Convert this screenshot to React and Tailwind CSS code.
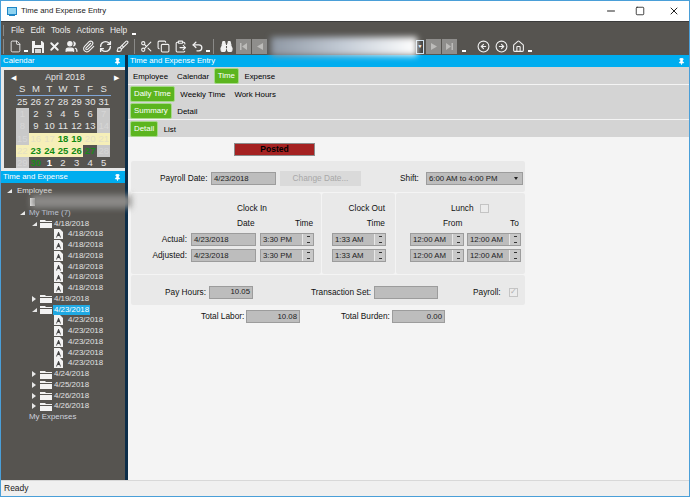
import {
  Binoculars, Brush, CircleArrowLeft, CircleArrowRight, ClipboardPaste, Copy, File, House, Minus, Paperclip,
  Pin, RefreshCw, Scissors, Square, Undo2, Users, X
} from 'lucide-react';

const fontStack = { fontFamily: '"Liberation Sans", Arial, sans-serif' };

function Dropdown() {
  return <span className="block h-[2px] w-[4px] translate-y-[4px] bg-white" />;
}

function Sep() {
  return <span className="mx-[3px] h-[15px] w-px bg-[#8a8a88]" />;
}

function ToolIcon({ icon: Icon, fill, strokeWidth = 2 }) {
  return (
    <span className="flex w-[17px] items-center justify-center">
      <Icon size={13} strokeWidth={strokeWidth} className="text-[#f2f2f2]" fill={fill ? '#f2f2f2' : 'none'} />
    </span>
  );
}

function SaveIcon() {
  return (
    <span className="flex w-[17px] items-center justify-center">
      <svg width="12" height="12" viewBox="0 0 12 12">
        <path d="M0 0h10l2 2v10H0z" fill="#f2f2f2" />
        <path d="M3 0h6v4H3z M2 7h8v5H2z" fill="#565450" />
        <path d="M3 8h6v4H3z" fill="#d8d8d8" />
      </svg>
    </span>
  );
}

function NavButton({ d }) {
  return (
    <span className="flex h-[15px] w-[15px] items-center justify-center bg-[#8f8e8c]">
      <svg width="11" height="11" viewBox="0 0 11 11"><path d={d} fill="#bdbcba" /></svg>
    </span>
  );
}

function PanelHeader({ title, className = '' }) {
  return (
    <div className={`flex items-center justify-between bg-[#00adef] pl-[2px] pr-[4px] text-[7.8px] text-white ${className}`}>
      <span>{title}</span>
      <Pin size={7} strokeWidth={3} fill="white" />
    </div>
  );
}

function CalendarCell({ value, kind }) {
  const styles = {
    normal: 'text-[#e6e6e6]',
    bold: 'text-white font-bold',
    off: 'bg-[#c9c9c9] text-[#d6d6d6]',
    pale: 'bg-[#f6efb8] text-[#e4e0c4]',
    posted: 'bg-[#f6efb8] text-[#128a12] font-bold',
    dark: 'text-[#1a8a1a] font-bold'
  };
  return <div className={`flex h-[12.2px] items-center justify-center ${styles[kind]}`}>{value}</div>;
}

const calendarRows = [
  [[25, 'normal'], [26, 'normal'], [27, 'normal'], [28, 'normal'], [29, 'normal'], [30, 'normal'], [31, 'normal']],
  [[1, 'off'], [2, 'normal'], [3, 'normal'], [4, 'normal'], [5, 'normal'], [6, 'normal'], [7, 'off']],
  [[8, 'off'], [9, 'normal'], [10, 'normal'], [11, 'normal'], [12, 'normal'], [13, 'normal'], [14, 'off']],
  [[15, 'off'], [16, 'pale'], [17, 'pale'], [18, 'posted'], [19, 'posted'], [20, 'pale'], [21, 'pale']],
  [[22, 'pale'], [23, 'posted'], [24, 'posted'], [25, 'posted'], [26, 'posted'], [27, 'dark'], [28, 'off']],
  [[29, 'off'], [30, 'dark'], [1, 'bold'], [2, 'normal'], [3, 'normal'], [4, 'normal'], [5, 'normal']]
];

function Calendar() {
  return (
    <div className="ml-[3px] mt-[3px] h-[98px] w-[122px] overflow-hidden bg-[#565450] text-[9.5px] text-[#e6e6e6]">
      <div className="flex h-[13px] items-center justify-between px-[7px] pt-[3px]">
        <span className="text-[7px] text-white">◀</span>
        <span className="text-[8.8px]">April 2018</span>
        <span className="text-[7px] text-white">▶</span>
      </div>
      <div className="ml-[11.5px] mr-[15.5px] grid grid-cols-7 border-b border-[#7fa6d8] text-center leading-[12px]">
        {['S', 'M', 'T', 'W', 'T', 'F', 'S'].map((day, index) => <div key={index}>{day}</div>)}
      </div>
      <div className="ml-[11.5px] mr-[15.5px]">
        {calendarRows.map((row, rowIndex) => (
          <div key={rowIndex} className="grid grid-cols-7">
            {row.map(([value, kind], index) => <CalendarCell key={index} value={value} kind={kind} />)}
          </div>
        ))}
      </div>
    </div>
  );
}

function FolderIcon() {
  return (
    <svg width="12" height="9" viewBox="0 0 12 9" className="shrink-0">
      <path d="M0 1h5l1 1h6v1H0z M0 4h12v5H0z" fill="#f2f2f2" />
    </svg>
  );
}

function DocIcon() {
  return (
    <svg width="9" height="10" viewBox="0 0 9 10" className="shrink-0">
      <path d="M0 0h6l3 3v7H0z" fill="#f2f2f2" />
      <path d="M2 8.5 4.3 3h.6L7 8.5H6L5.5 7H3.5L3 8.5z" fill="#444" />
    </svg>
  );
}

function Twisty({ open }) {
  return (
    <svg width="5" height="6" viewBox="0 0 5 6" className="shrink-0">
      {open ? <path d="M5 1v4H0z" fill="#e8e8e8" /> : <path d="M0 0l4 3-4 3z" fill="#e8e8e8" />}
    </svg>
  );
}

function TreeRow({ indent, children }) {
  return (
    <div className="flex h-[10.76px] items-center whitespace-nowrap" style={{ paddingLeft: indent }}>
      {children}
    </div>
  );
}

function DateFolder({ date, open, selected }) {
  return (
    <TreeRow indent={31}>
      <Twisty open={open} />
      <span className="ml-[3px] flex w-[13px]"><FolderIcon /></span>
      <span className={`px-[1px] leading-[10px] ${selected ? 'bg-[#1fa9e3] text-white' : ''}`}>{date}</span>
    </TreeRow>
  );
}

function DateEntry({ date }) {
  return (
    <TreeRow indent={53}>
      <DocIcon />
      <span className="ml-[5px]">{date}</span>
    </TreeRow>
  );
}

function Tree() {
  return (
    <div className="relative min-h-0 flex-1 bg-[#565450] pt-[3px] text-[7.9px] text-[#e2e2e2]">
      <TreeRow indent={6}><Twisty open /><span className="ml-[5px]">Employee</span></TreeRow>
      <TreeRow indent={29}><span className="h-[8px] w-[5px] bg-white" /></TreeRow>
      <TreeRow indent={19}><Twisty open /><span className="ml-[4px] text-[#bfc5d6]">My Time (7)</span></TreeRow>
      <DateFolder date="4/18/2018" open />
      {[0, 1, 2, 3, 4, 5].map((key) => <DateEntry key={key} date="4/18/2018" />)}
      <DateFolder date="4/19/2018" />
      <DateFolder date="4/23/2018" open selected />
      {[0, 1, 2, 3, 4].map((key) => <DateEntry key={key} date="4/23/2018" />)}
      <DateFolder date="4/24/2018" />
      <DateFolder date="4/25/2018" />
      <DateFolder date="4/26/2018" />
      <DateFolder date="4/26/2018" />
      <TreeRow indent={28}><span className="text-[#cfd3de]">My Expenses</span></TreeRow>
      <div className="absolute left-[30px] top-[12px] h-[13px] w-[100px] bg-[#8b8a88] blur-[3px]" />
    </div>
  );
}

function Tab({ label, active }) {
  if (active) {
    return (
      <span className="mr-px flex h-[16px] translate-y-[-1px] items-center rounded-[2px] border border-[#a6d98a] bg-[#5cb51f] px-[3px] text-white">
        {label}
      </span>
    );
  }
  return <span className="mx-[2.5px] px-[2px]">{label}</span>;
}

function TabRow({ children, paddingLeft = 'pl-[2px]' }) {
  return (
    <div className={`flex h-[17px] items-center bg-[#d4d4d4] pt-[3px] text-[7.9px] text-black ${paddingLeft}`}>{children}</div>
  );
}

function Field({ value, className = '', align = 'left', children }) {
  return (
    <span className={`flex h-[13px] items-center border border-[#9c9c9c] bg-[#bdbdbd] px-[2px] text-[7.8px] text-[#222] ${align === 'right' ? 'justify-end' : ''} ${className}`}>
      {value}
      {children}
    </span>
  );
}

function TimeField({ value, className = 'w-[54px]' }) {
  return (
    <span className={`flex h-[13px] items-center border border-[#9c9c9c] bg-[#bdbdbd] pl-[2px] text-[7.8px] text-[#222] ${className}`}>
      <span className="flex-1 whitespace-nowrap">{value}</span>
      <span className="flex h-full w-[11px] flex-col items-center justify-around border-l border-[#e8e8e8] bg-[#c8c8c8]">
        <span className="h-[1px] w-[3px] bg-[#333]" />
        <span className="h-[1px] w-[3px] bg-[#333]" />
      </span>
    </span>
  );
}

function ClockLabel({ children }) {
  return <span className="w-[60px] pr-[4px] text-right">{children}</span>;
}

function CheckBox({ checked }) {
  return (
    <span className="flex h-[9px] w-[9px] items-center justify-center border border-[#c4c4c4] bg-[#ececec] text-[8px] leading-none text-[#b0b0b0]">
      {checked ? '✓' : ''}
    </span>
  );
}

export default function App() {
  return (
    <div className="flex h-[497px] w-[690px] flex-col overflow-hidden border border-[#4a9fd8] bg-white" style={fontStack}>
      <div className="flex h-[20px] shrink-0 items-center bg-white pl-[6px] text-[7.8px] text-[#222]">
        <svg width="10" height="9" viewBox="0 0 10 9" className="mr-[4px]">
          <rect x="0.5" y="0.5" width="9" height="7" fill="#8fd3f0" stroke="#1f86c6" />
          <rect x="2" y="8" width="6" height="1" fill="#1f86c6" />
        </svg>
        <span>Time and Expense Entry</span>
        <span className="ml-auto flex items-center text-[#222]">
          <span className="flex w-[20px] justify-center"><Minus size={12} /></span>
          <span className="flex w-[38px] justify-center"><Square size={10} /></span>
          <span className="flex w-[30px] justify-center"><X size={12} /></span>
        </span>
      </div>

      <div className="h-px shrink-0 bg-[#3c3c3c]" />
      <div className="flex h-[16px] shrink-0 items-center bg-[#565450] pl-[2px] text-[8.4px] text-[#ececec]">
        <span className="mr-[7px] h-[11px] w-px bg-[#8a8a88]" />
        <span className="mr-[6px]">File</span>
        <span className="mr-[6px]">Edit</span>
        <span className="mr-[6px]">Tools</span>
        <span className="mr-[6px]">Actions</span>
        <span className="mr-[5px]">Help</span>
        <Dropdown />
      </div>

      <div className="relative flex h-[17px] shrink-0 items-center bg-[#565450] pl-[2px]">
        <span className="mr-[3px] h-[15px] w-px bg-[#8a8a88]" />
        <ToolIcon icon={File} strokeWidth={1.6} />
        <span><Dropdown /></span>
        <span className="ml-[1px]"><SaveIcon /></span>
        <ToolIcon icon={X} strokeWidth={3.5} />
        <ToolIcon icon={Users} fill />
        <ToolIcon icon={Paperclip} />
        <ToolIcon icon={RefreshCw} strokeWidth={2.6} />
        <ToolIcon icon={Brush} />
        <Sep />
        <ToolIcon icon={Scissors} />
        <ToolIcon icon={Copy} />
        <ToolIcon icon={ClipboardPaste} />
        <ToolIcon icon={Undo2} strokeWidth={2.4} />
        <Dropdown />
        <Sep />
        <span className="ml-[1px]"><ToolIcon icon={Binoculars} fill /></span>
        <span className="ml-[1px]"><NavButton d="M2 2h1.5v7H2z M9 2v7L4 5.5z" /></span>
        <span className="ml-[1px]"><NavButton d="M9 2v7L3 5.5z" /></span>
        <span className="h-[15px] w-[149px] shrink-0" />
        <span className="flex h-[14px] w-[8px] items-center justify-center border border-[#cfe0ee] bg-[#3f3e3c] text-[5px] text-white">▼</span>
        <span className="ml-[2px]"><NavButton d="M3 2v7l6-3.5z" /></span>
        <span className="ml-[1px]"><NavButton d="M2 2v7l5-3.5z M7.5 2H9v7H7.5z" /></span>
        <span className="ml-[5px]"><Dropdown /></span>
        <span className="ml-[2px]"><Sep /></span>
        <span className="ml-[1px]"><ToolIcon icon={CircleArrowLeft} /></span>
        <span className="ml-[1px]"><ToolIcon icon={CircleArrowRight} /></span>
        <ToolIcon icon={House} />
        <span className="ml-[1px]"><Dropdown /></span>
        <div className="absolute left-[270px] top-[-1px] h-[19px] w-[146px] bg-gradient-to-r from-[#8f98a4] via-[#c4ccd6] to-white blur-[3px]" />
      </div>

      <div className="flex min-h-0 flex-1">
        <div className="flex w-[124px] shrink-0 flex-col bg-[#e9e9e9]">
          <PanelHeader title="Calendar" className="h-[12px] shrink-0" />
          <Calendar />
          <div className="mt-[3px] h-[12px] shrink-0">
            <PanelHeader title="Time and Expense" className="h-[12px]" />
          </div>
          <Tree />
        </div>
        <div className="w-[3px] shrink-0 bg-[#0c2d48]" />

        <div className="flex min-w-0 flex-1 flex-col bg-[#f4f4f4] text-[8.3px] text-[#111]">
          <PanelHeader title="Time and Expense Entry" className="h-[12px] shrink-0" />
          <TabRow paddingLeft="pl-[0.5px]">
            <Tab label="Employee" />
            <Tab label="Calendar" />
            <Tab label="Time" active />
            <Tab label="Expense" />
          </TabRow>
          <div className="h-px bg-[#f4f4f4]" />
          <TabRow>
            <Tab label="Daily Time" active />
            <Tab label="Weekly Time" />
            <Tab label="Work Hours" />
          </TabRow>
          <TabRow>
            <Tab label="Summary" active />
            <Tab label="Detail" />
          </TabRow>
          <div className="h-px bg-[#f4f4f4]" />
          <TabRow>
            <Tab label="Detail" active />
            <Tab label="List" />
          </TabRow>

          <div className="ml-[106px] mt-[6px] flex h-[13px] w-[81px] items-center justify-center border border-[#8c8c8c] bg-[#a52222] text-[8.5px] font-bold text-black">
            Posted
          </div>

          <div className="ml-[3px] mt-[5px] w-[394px]">
            <div className="flex h-[31px] items-center rounded-[2px] bg-[#e9e9e9] pt-[4px]">
              <span className="ml-[29px] w-[51px]">Payroll Date:</span>
              <Field value="4/23/2018" className="w-[65px]" />
              <span className="ml-[4px] flex h-[15px] w-[81px] items-center justify-center bg-[#dadada] text-[#a8a8a8]">Change Date...</span>
              <span className="ml-[39px] w-[26px]">Shift:</span>
              <Field value="6:00 AM to 4:00 PM" className="w-[97px] justify-between pr-[4px]">
                <span className="h-0 w-0 border-x-[2px] border-t-[3px] border-x-transparent border-t-[#222]" />
              </Field>
            </div>

            <div className="mt-px flex h-[81px] gap-px">
              <div className="w-[190px] rounded-[2px] bg-[#e9e9e9]">
                <div className="mt-[10px] pl-[106px] leading-[10px]">Clock In</div>
                <div className="mt-[5px] flex leading-[10px]">
                  <span className="ml-[106px] w-[58px]">Date</span>
                  <span>Time</span>
                </div>
                <div className="mt-[5px] flex items-center">
                  <ClockLabel>Actual:</ClockLabel>
                  <Field value="4/23/2018" className="w-[65px]" />
                  <span className="ml-[4px]"><TimeField value="3:30 PM" /></span>
                </div>
                <div className="mt-[3px] flex items-center">
                  <ClockLabel>Adjusted:</ClockLabel>
                  <Field value="4/23/2018" className="w-[65px]" />
                  <span className="ml-[4px]"><TimeField value="3:30 PM" /></span>
                </div>
              </div>
              <div className="w-[73px] rounded-[2px] bg-[#e9e9e9] pl-[10px]">
                <div className="mt-[10px] w-[53px] whitespace-nowrap text-right leading-[10px]">Clock Out</div>
                <div className="mt-[5px] w-[53px] text-right leading-[10px]">Time</div>
                <div className="mt-[5px]"><TimeField value="1:33 AM" /></div>
                <div className="mt-[3px]"><TimeField value="1:33 AM" /></div>
              </div>
              <div className="flex-1 rounded-[2px] bg-[#e9e9e9] pl-[14px]">
                <div className="mt-[10px] flex h-[10px] items-center pl-[41px]">
                  <span className="mr-[6px]">Lunch</span>
                  <CheckBox />
                </div>
                <div className="mt-[5px] flex leading-[10px]">
                  <span className="ml-[33px] w-[67px]">From</span>
                  <span>To</span>
                </div>
                <div className="mt-[5px] flex gap-[3px]">
                  <TimeField value="12:00 AM" />
                  <TimeField value="12:00 AM" />
                </div>
                <div className="mt-[3px] flex gap-[3px]">
                  <TimeField value="12:00 AM" />
                  <TimeField value="12:00 AM" />
                </div>
              </div>
            </div>

            <div className="mt-px flex h-[30px] items-center rounded-[2px] bg-[#e9e9e9] pt-[4px]">
              <span className="ml-[34px] w-[44px]">Pay Hours:</span>
              <Field value="10.05" align="right" className="w-[44px]" />
              <span className="ml-[58px] w-[63px] whitespace-nowrap">Transaction Set:</span>
              <Field value="" className="w-[64px]" />
              <span className="ml-[35px] w-[36px]">Payroll:</span>
              <CheckBox checked />
            </div>
          </div>

          <div className="ml-[3px] mt-[5px] flex items-center">
            <span className="ml-[70px] w-[45px] whitespace-nowrap">Total Labor:</span>
            <Field value="10.08" align="right" className="w-[54px]" />
            <span className="ml-[41px] w-[51px] whitespace-nowrap">Total Burden:</span>
            <Field value="0.00" align="right" className="w-[53px]" />
          </div>
        </div>
      </div>

      <div className="flex h-[16px] shrink-0 items-center border-t border-[#d8d8d8] bg-[#f0f0f0] pl-[3px] text-[8.5px] text-[#222]">Ready</div>
    </div>
  );
}
